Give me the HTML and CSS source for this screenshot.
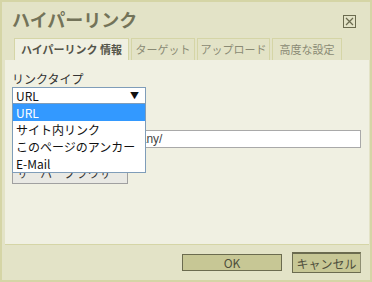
FILE: index.html
```html
<!DOCTYPE html>
<html lang="ja">
<head>
  <meta charset="UTF-8" />
  <title>ハイパーリンク</title>
  <link rel="stylesheet" href="styles.css">
</head>
<body>
  <div class="dialog">
    <div class="dialog-header">
      <span class="dialog-title">ハイパーリンク</span>
      <span class="close-btn">
        <svg width="13" height="13" viewBox="0 0 13 13">
          <rect x="0.5" y="0.5" width="12" height="12" fill="none" stroke="#6b6b4f" />
          <path d="M3 3 L10 10 M10 3 L3 10" stroke="#6b6b4f" stroke-width="1.2" />
        </svg>
      </span>
    </div>

    <div class="tab-row">
      <div class="tab active tab-info">ハイパーリンク 情報</div>
      <div class="tab tab-target">ターゲット</div>
      <div class="tab tab-upload">アップロード</div>
      <div class="tab tab-adv">高度な設定</div>
    </div>

    <div class="tab-panel">
      <label class="field-label">リンクタイプ</label>
      <div class="select-wrap">
        <div class="select-box">
          <span>URL</span>
          <span class="select-arrow">&#9660;</span>
        </div>
        <ul class="select-list">
          <li class="selected">URL</li>
          <li>サイト内リンク</li>
          <li>このページのアンカー</li>
          <li>E-Mail</li>
        </ul>
      </div>
      <div class="url-row">
        <input class="url-input" type="text" value="http://example.jp/company/" />
      </div>
      <button class="browse-btn">サーバーブラウザー</button>
    </div>

    <div class="dialog-footer">
      <button class="footer-btn ok-btn">OK</button>
      <button class="footer-btn cancel-btn">キャンセル</button>
    </div>
  </div>
</body>
</html>
```

FILE: styles.css
```css
* {
  box-sizing: border-box;
}

html, body {
  margin: 0;
  padding: 0;
  background: #e3e3c7;
  font-family: 'Noto Sans CJK JP', 'Noto Sans', sans-serif;
}

.dialog {
  width: 372px;
  height: 282px;
  border: 2px solid #d5d5a6;
  background: #e3e3c7;
  display: flex;
  flex-direction: column;
  padding: 0 1px 0 3px;
}

.dialog-header {
  height: 36px;
  display: flex;
  align-items: center;
  justify-content: space-between;
  padding: 0 13px 3px 7px;
}

.dialog-title {
  font-size: 18px;
  font-weight: bold;
  color: #737359;
}

.close-btn {
  display: flex;
  margin-top: 5px;
}

.tab-row {
  display: flex;
  gap: 2px;
  padding-left: 9px;
  height: 22px;
}

.tab {
  height: 22px;
  font-size: 11px;
  line-height: 21px;
  text-align: center;
  color: #8a8a74;
  border: 1px solid #d5d5a6;
  border-bottom: none;
  background: #e3e3c7;
  white-space: nowrap;
}

.tab.active {
  color: #55554a;
  font-weight: bold;
  background: #f0f0e2;
}

.tab-info {
  width: 115px;
}

.tab-target {
  width: 64px;
}

.tab-upload {
  width: 73px;
}

.tab-adv {
  width: 70px;
}

.tab-panel {
  flex: 1;
  background: #f0f0e2;
  padding: 11px 6px 0 7px;
  border-bottom: 1px solid #d5d5a6;
}

.field-label {
  display: block;
  font-size: 12px;
  color: #333;
  line-height: 16px;
}

.select-wrap {
  position: relative;
  width: 134px;
}

.select-box {
  height: 17px;
  border: 1px solid #7f9db9;
  background: #fff;
  display: flex;
  align-items: center;
  justify-content: space-between;
  padding: 0 6px 0 3px;
  font-size: 12px;
  color: #111;
}

.select-arrow {
  font-size: 9px;
  color: #111;
}

.select-list {
  position: absolute;
  top: 16px;
  left: 0;
  width: 134px;
  margin: 0;
  padding: 0;
  list-style: none;
  background: #fff;
  border: 1px solid #7f9db9;
  z-index: 5;
}

.select-list li {
  height: 17px;
  line-height: 17px;
  padding-left: 3px;
  font-size: 12px;
  color: #111;
}

.select-list li.selected {
  background: #3399ff;
  color: #fff;
}

.url-row {
  margin-top: 26px;
  display: flex;
}

.url-input {
  width: 349px;
  height: 18px;
  border: 1px solid #a9a9a9;
  background: #fff;
  font-family: 'Liberation Sans', sans-serif;
  font-size: 12px;
  color: #444;
  padding: 0 6px;
}

.browse-btn {
  display: block;
  margin-top: 12px;
  width: 116px;
  height: 24px;
  border: 1px solid #a0a0a0;
  background: #e9e9e4;
  font-family: 'Noto Sans CJK JP', sans-serif;
  font-size: 12px;
  color: #333;
  white-space: nowrap;
  padding: 0;
}

.dialog-footer {
  height: 35px;
  display: flex;
  align-items: center;
  justify-content: flex-end;
  gap: 10px;
  padding-right: 8px;
}

.footer-btn {
  font-family: 'Noto Sans CJK JP', 'Liberation Sans', sans-serif;
  font-size: 12px;
  color: #4f4f3c;
  background: #c7c795;
  border: 1px solid #6b6b4f;
  padding: 0;
}

.ok-btn {
  width: 100px;
  height: 17px;
  line-height: 14px;
}

.cancel-btn {
  width: 69px;
  height: 21px;
  border-width: 2px 1px 1px 1px;
  border-color: #6b6b4f #8e8e72 #6b6b4f #6b6b4f;
}
```
